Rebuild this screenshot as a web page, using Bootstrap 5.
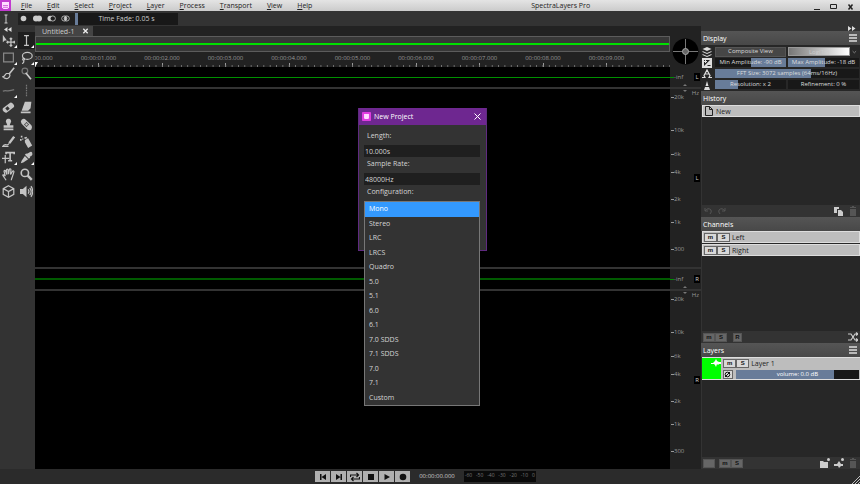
<!DOCTYPE html>
<html lang="en" data-bs-theme="dark">
<head>
<meta charset="utf-8">
<meta name="viewport" content="width=device-width, initial-scale=1">
<title>SpectraLayers Pro</title>
<link rel="stylesheet" href="https://cdn.jsdelivr.net/npm/bootstrap@5.3.0/dist/css/bootstrap.min.css">
<style>
  body { font: 7px/9px "Open Sans", "Noto Sans", sans-serif; color: #ccc; background: #272727; }
  svg { display: block; }
  button, input, select { font: inherit; color: inherit; border: 0; padding: 0; margin: 0; background: none; }
  button { display: flex; align-items: center; justify-content: center; }
  a { color: inherit; text-decoration: none; }
  .ico { width: 10px; height: 10px; fill: none; stroke: currentColor; stroke-width: 2; }
  .solid { fill: currentColor; stroke: none; }

  .menubar { height: 11px; color: #222; background: linear-gradient(#e4e4e4, #cbcbcb); }
  .menus { gap: 15px; margin-left: 10px; }
  .logo { width: 11px; height: 11px; }
  .winbtn { width: 17px; height: 11px; }
  .options { height: 15px; background: #333; }
  .optbox { background: #212121; height: 12px; gap: 5px; padding: 0 5px 0 1px; }
  .optbox .ico { width: 9px; height: 9px; }
  .slide.fade-time { width: 103px; height: 12px; }
  .slide.fade-time input { height: 12px; }

  .tools { width: 35px; background: #333; color: #c4c4c4; }
  .collapse-row { height: 6px; }
  .panels .collapse-row { height: 5px; }
  .toolgrid { display: grid; grid-template-columns: 1fr 1fr; grid-template-rows: repeat(10, 1fr); height: 168px; }
  .toolgrid button { position: relative; }
  .toolgrid .ico { width: 13px; height: 13px; stroke-width: 1.5; }
  .toolgrid .more::after { content: ""; position: absolute; right: 1px; bottom: 1px; border: 0 solid transparent; border-width: 0 0 3px 3px; border-bottom-color: #fff; }
  .toolgrid .on { background: #1e1e1e; }
  .toolgrid .dim { color: #777; }

  .doctabs { height: 10px; background: #222; }
  .doctab { width: 58px; padding: 0 4px 0 7px; background: #444; }
  .overview { height: 16px; background: #383838; border: 1px solid #5c5c5c; }
  .overview i { display: block; height: 2px; background: #00e000; }
  .ruler { height: 15px; background: #222; color: #999; font-size: 6px; overflow: hidden; position: relative; }
  .ruler-marks { margin: 0 5% 0 -5%; height: 15px; }
  .ruler-marks span { width: 10%; padding-top: 2px; white-space: nowrap; display: flex; flex-direction: column; align-items: center; }
  .ruler-marks span::after { content: ""; width: 1px; height: 4px; background: #999; }
  .ruler::after { content: ""; position: absolute; inset: auto 0 0 0; height: 2px; background: linear-gradient(90deg, #777 1px, transparent 1px) 0 0 / 1% 2px; }
  .playhead { position: absolute; left: -3px; bottom: 0; z-index: 1; border: 3px solid transparent; border-top: 5px solid #fff; border-bottom: 0; }
  .scale { width: 31px; background: #222; color: #999; font-size: 6px; position: relative; flex: none; }
  .lane-scale { padding-right: 1px; }
  .wave { height: 22px; border-bottom: 2px solid #333; }
  .wave.second { height: 24px; border-top: 2px solid #333; }
  .wave .view, .overview { display: flex; flex-direction: column; justify-content: center; }
  .wave .view i { display: block; height: 1px; background: #009000; }
  .wave.second .view i { height: 2px; background: #005a00; }
  .view { background: #000; flex: 1; min-width: 0; }
  .freq { display: grid; grid-template-rows: 13fr 33fr 24fr 18fr 27fr 23fr 27fr 13fr; flex: 1; }
  .freq span, .inf { display: flex; align-items: flex-end; line-height: 9px; }
  .freq span::before, .inf::before { content: ""; width: 3px; height: 1px; background: #999; margin: 0 0 4px 1px; }
  .inf::before { background: #009000; margin-left: 0; width: 4px; }
  .tag { width: 6px; height: 8px; font-size: 6px; line-height: 8px; text-align: center; background: #000; color: #ccc; }
  .hz { position: absolute; right: 2px; top: 0; }
  .tri { position: absolute; left: 13px; width: 4px; height: 2px; background: #777; }
  .tri.up { bottom: 1px; clip-path: polygon(50% 0, 100% 100%, 0 100%); }
  .tri.down { top: 1px; clip-path: polygon(0 0, 100% 0, 50% 100%); }

  .panels { width: 159px; background: #333; }
  .phead { height: 14px; padding: 0 2px; color: #ddd; background: linear-gradient(#555, #484848); display: flex; align-items: center; justify-content: space-between; }
  .phead h2 { font-size: 7px; line-height: 9px; margin: 0; font-weight: 400; }
  .pbody { background: #272727; flex: 1; min-height: 0; border-left: 1px solid #333; }
  .pfoot { height: 12px; padding: 0 2px; background: #333; color: #ccc; }
  .settings { display: grid; grid-template-columns: 12px 1fr 1fr; column-gap: 2px; grid-auto-rows: 11px; row-gap: 0; padding: 1px 1px 1px 0; align-items: center; font-size: 6px; background: #272727; color: #ddd; }
  .settings > .ico { justify-self: center; }
  .cbtn { height: 10px; background: #464646; border: 1px solid #555; }
  .grad { height: 9px; width: 100%; background: linear-gradient(90deg, #777, #fff); color: #ccc; appearance: none; text-align: center; border: 1px solid #999; }
  .slide { display: grid; height: 9px; align-items: center; }
  .slide > * { grid-area: 1 / 1; }
  .slide label { text-align: center; z-index: 1; pointer-events: none; white-space: nowrap; line-height: 9px; }
  .slide input { appearance: none; width: 100%; height: 9px; background: linear-gradient(90deg, #181818 var(--from), #687c99 var(--from) var(--to), #181818 var(--to)); }
  .slide input::-webkit-slider-thumb { appearance: none; width: 1px; height: 9px; background: transparent; }
  .entry { height: 12px; background: #bdbdbd; border: 1px solid #ddd; color: #222; padding-left: 1px; gap: 2px; }
  .entry + .entry { margin-top: 1px; }
  .ms { width: 13px; height: 9px; color: #111; background: #d8d8d8; border: 1px solid #666; font: 700 6px/7px "Liberation Sans", sans-serif; }
  .ms.slim { width: 10px; }
  .pfoot .ms { width: 12px; background: #666; border: 1px solid #555; }
  .pfoot .ms.slim { width: 9px; margin-left: 6px; }
  .layer { height: 23px; background: #bdbdbd; border: 1px solid #ddd; border-width: 1px 0; color: #222; }
  .layer .chip { width: 20px; background: #0f0; color: #fff; }
  .layer .rows { padding: 1px 1px 0 2px; }
  .layer-name { padding-left: 2px; }
  .layer .slide { font-size: 6px; margin-left: 3px; }
  .faint { color: #555; }

  .dialogbox { position: absolute; left: 358px; top: 108px; width: 129px; height: 143px; background: #333; border: 1px solid #5f2a80; border-top: 0; color: #d5d5d5; }
  .dialogbox header { height: 17px; background: #6e2790; color: #fff; padding: 0 5px 0 3px; gap: 3px; }
  .dialogbox form { padding: 4px 6px 0 5px; }
  .dialogbox form > label { display: block; height: 16px; line-height: 14px; padding-left: 3px; }
  .dialogbox form > input { display: block; width: 100%; height: 12px; background: #1f1f1f; padding-left: 1px; }
  .configs { display: block; width: 100%; height: 205px; overflow: hidden; background: #333; border: 1px solid #777; border-radius: 0; appearance: none; outline: 0; }
  .configs option { height: 14px; min-height: 14px; line-height: 12px; padding: 2px 4px 0; color: #d5d5d5; }
  .configs option:nth-child(odd) { height: 15px; }
  .configs option:checked { background: #39f linear-gradient(#39f, #39f); color: #fff; }

  .transport { height: 15px; background: #2b2b2b; }
  .tbtns button { width: 16px; height: 11px; background: #b0b0b0; color: #111; border-right: 1px solid #2b2b2b; }
  .clock { font-size: 6px; margin: 0 9px 0 8px; }
  .meter { width: 72px; height: 11px; padding: 0 1px; background: #0a0a0a; color: #777; font-size: 5px; }
  .grip { width: 9px; height: 9px; align-self: flex-end; }
</style>
<script src="https://cdn.jsdelivr.net/npm/bootstrap@5.3.0/dist/js/bootstrap.bundle.min.js"></script>
</head>
<body class="d-flex flex-column vh-100 overflow-hidden">

<header class="menubar d-flex align-items-center">
  <svg class="logo" viewBox="0 0 11 11"><rect width="11" height="11" fill="#c23ad0"/><path d="M2 2h7v5.500l-1.500 1.500H3.500L2 7.500z" fill="#ffd9ff"/><path d="M3 5.500h5M3 7.300h5" stroke="#c23ad0" stroke-width=".7"/></svg>
  <nav class="menus d-flex">
    <a href="#"><u>F</u>ile</a><a href="#"><u>E</u>dit</a><a href="#"><u>S</u>elect</a><a href="#"><u>P</u>roject</a><a href="#"><u>L</u>ayer</a><a href="#"><u>P</u>rocess</a><a href="#"><u>T</u>ransport</a><a href="#"><u>V</u>iew</a><a href="#"><u>H</u>elp</a>
  </nav>
  <div class="flex-fill text-center">SpectraLayers Pro</div>
  <button class="winbtn" aria-label="Minimize"><svg class="ico" viewBox="0 0 10 10"><path d="M1 8.500h6" stroke-width="1"/></svg></button>
  <button class="winbtn" aria-label="Maximize"><svg class="ico" viewBox="0 0 10 10"><path d="M.5 3.500h6v4h-6z" stroke-width="1"/></svg></button>
  <button class="winbtn" aria-label="Close"><svg class="ico" viewBox="0 0 10 10"><path d="M1.500 3.500l4 5M5.500 3.500l-4 5" stroke-width="1.500"/></svg></button>
</header>

<div class="options d-flex align-items-center">
  <svg class="ico mx-1" viewBox="0 0 10 10"><path d="M.5 1h3M.5 9h3M2 1v8" stroke-width="1"/></svg>
  <div class="optbox d-flex align-items-center">
    <button aria-label="Replace"><svg class="ico solid" viewBox="0 0 9 9"><circle cx="4.500" cy="4.500" r="2.800"/></svg></button>
    <button aria-label="Add"><svg class="ico solid" viewBox="0 0 9 9"><circle cx="3" cy="4.500" r="3"/><circle cx="6" cy="4.500" r="3"/></svg></button>
    <button aria-label="Subtract"><svg class="ico" viewBox="0 0 9 9"><circle cx="3.300" cy="4.500" r="2.800" fill="currentColor" stroke="none"/><circle cx="5.800" cy="4.500" r="2.600" fill="#212121" stroke-width=".8"/></svg></button>
    <button aria-label="Intersect"><svg class="ico" viewBox="0 0 9 9"><circle cx="3.300" cy="4.500" r="2.600" stroke-width=".8"/><circle cx="5.700" cy="4.500" r="2.600" stroke-width=".8"/><path d="M4.500 2.200a2.700 2.700 0 0 1 0 4.600a2.700 2.700 0 0 1 0-4.600z" fill="currentColor" stroke="none"/></svg></button>
  </div>
  <div class="slide fade-time" style="--from:0%;--to:3%"><label for="fade">Time Fade: 0.05 s</label><input id="fade" type="range" value="3"></div>
</div>

<main class="d-flex flex-fill overflow-hidden">
  <aside class="tools">
    <button class="collapse-row ms-1" aria-label="Collapse tools"><svg width="8" height="5" viewBox="0 0 8 5" fill="#ddd"><path d="M3.500 0v5L0 2.500zM7.500 0v5L4 2.500z"/></svg></button>
    <div class="toolgrid">
      <button class="more" aria-label="Move"><svg class="ico" viewBox="0 0 16 16"><path d="M1 1v9l2.500-2L6 8z" fill="currentColor" stroke="none"/><path d="M11 5v10M6 10h10M9.500 6.500 11 5l1.500 1.500M9.500 13.500 11 15l1.500-1.500M7.500 8.500 6 10l1.500 1.500M14.500 8.500 16 10l-1.500 1.500"/></svg></button>
      <button class="on more" aria-label="Time selection"><svg class="ico" viewBox="0 0 16 16"><path d="M5 2h6M5 14h6M8 2v12"/></svg></button>
      <button class="more" aria-label="Rectangle"><svg class="ico" viewBox="0 0 16 16"><path d="M2 2.500h12v11H2z" stroke="#888"/></svg></button>
      <button class="more" aria-label="Lasso"><svg class="ico" viewBox="0 0 16 16"><ellipse cx="9" cy="6" rx="6" ry="4.200"/><path d="M4.500 9c-2 1-1 3 .5 2s0-3-1.500-2M4.500 12c.5 1.500-.5 3-2 3.500"/></svg></button>
      <button aria-label="Brush selection"><svg class="ico" viewBox="0 0 16 16"><path d="M15 1 8.500 9" stroke-width="2"/><path d="M8.500 8c2 1 1.500 5-1.500 6-2 .5-4 0-6-2 2.500 0 2.500-3 4.500-4z"/></svg></button>
      <button class="dim" aria-label="Wand"><svg class="ico" viewBox="0 0 16 16"><circle cx="6" cy="5" r="3.500"/><path d="m7 7 6.500 8" stroke="#ccc" stroke-width="2"/></svg></button>
      <button class="dim more" aria-label="Harmonics"><svg class="ico" viewBox="0 0 16 16"><path d="M1 9c4-2 6 1 14-2"/></svg></button>
      <button class="dim" aria-label="Transient"><svg class="ico" viewBox="0 0 16 16"><path d="M8 1v14" stroke-dasharray="2 1"/></svg></button>
      <button aria-label="Eraser"><svg class="ico solid" viewBox="0 0 16 16"><path fill-rule="evenodd" d="M1 9 10 2q2-1 4 2t0 4L6 14q-2 1-4-1t-1-4zm3 0 2.500 3 3-2.500L7 6.500z"/></svg></button>
      <button aria-label="Amplify"><svg class="ico solid" viewBox="0 0 16 16"><path d="M6 1h8l-1 8-3 3H2zM1 13h12v2H1z"/></svg></button>
      <button aria-label="Clone stamp"><svg class="ico solid" viewBox="0 0 16 16"><path d="M8 1a3 3 0 0 1 2.500 5L9.500 9H14v3H2V9h4.500l-1-3A3 3 0 0 1 8 1zM2 13h12v2H2z"/></svg></button>
      <button aria-label="Heal"><svg class="ico solid" viewBox="0 0 16 16"><path fill-rule="evenodd" d="M2 2q3-2 5 0l7 7q2 3 0 5t-5 0L2 7Q0 4 2 2zm6 3L5 8l3 3 3-3z"/><circle cx="8" cy="8" r="1.500"/></svg></button>
      <button aria-label="Pencil"><svg class="ico" viewBox="0 0 16 16"><path d="M15 2 9 10" stroke-width="3"/><path d="M9 10c-2 5-5-1-8 4h7" stroke-width="1.500"/></svg></button>
      <button aria-label="Spray"><svg class="ico solid" viewBox="0 0 16 16"><path d="m6 6 4-2 5 9-5 3-4-7zM5 3l3-1 1 2-3 1zM1 1h2v2H1zM0 5h2v2H0zM3 4h1v2H3z"/></svg></button>
      <button class="more" aria-label="Text transform"><svg class="ico" viewBox="0 0 16 16"><path d="M5 4V2h10v2M10 2v10M7.500 12h5" stroke-width="2"/><path d="M0 9h9M4 5v10"/></svg></button>
      <button class="more" aria-label="Eyedropper"><svg class="ico solid" viewBox="0 0 16 16"><path d="M11 2q3-2 4 0t-1 4l-2 1 .5 1-1.500 1.500-5-5L7.500 3l1 .5zM6 6l4 4-6 4-3 1 1-3z"/></svg></button>
      <button aria-label="Hand"><svg class="ico" viewBox="0 0 16 16"><path d="M5 15c-1-2-3-4-4-6 0-1 1.500-1 3 1L2.500 4c0-1.500 1.500-1.500 2 0L6 8 5.500 2.500c0-1.500 2-1.500 2 0L8 7.500 9 2c.3-1.300 2-1 2 .3L10.500 8 13 4c.8-1 2-.3 1.600 1L13 10c-.5 2-1.500 3-1.500 5"/></svg></button>
      <button aria-label="Zoom"><svg class="ico" viewBox="0 0 16 16"><circle cx="6" cy="6" r="4.500" stroke-width="2"/><path d="m9.500 9.500 5 5" stroke-width="3"/></svg></button>
      <button aria-label="3D view"><svg class="ico" viewBox="0 0 16 16"><path d="m8 1 6.500 3.500v7L8 15l-6.500-3.500v-7zM1.500 4.500 8 8l6.500-3.500M8 8v7"/></svg></button>
      <button aria-label="Playback"><svg class="ico" viewBox="0 0 16 16"><path d="M0 5h3.500L8 1v14l-4.500-4H0z" fill="currentColor" stroke="none"/><path d="M10 5.500q2 2.500 0 5M12 3.500q3.500 4.500 0 9M13.500 1.500q4.500 6.500 0 13"/></svg></button>
    </div>
  </aside>

  <section class="d-flex flex-column flex-fill overflow-hidden">
    <div class="doctabs d-flex">
      <div class="doctab d-flex align-items-center justify-content-between">Untitled-1<button aria-label="Close tab"><svg width="7" height="8" viewBox="0 0 8 8"><path d="M1.500 1.500l5 5M6.500 1.500l-5 5" stroke="#eee" stroke-width="1.500"/></svg></button></div>
    </div>
    <div class="d-flex">
      <div class="flex-fill overflow-hidden">
        <div class="overview"><i></i></div>
        <div class="ruler"><b class="playhead"></b>
          <div class="ruler-marks d-flex"><span>00:00:00.000</span><span>00:00:01.000</span><span>00:00:02.000</span><span>00:00:03.000</span><span>00:00:04.000</span><span>00:00:05.000</span><span>00:00:06.000</span><span>00:00:07.000</span><span>00:00:08.000</span><span>00:00:09.000</span></div>
        </div>
      </div>
      <div class="scale d-flex align-items-center justify-content-center">
        <svg width="27" height="27" viewBox="0 0 27 27"><circle cx="13.500" cy="13.500" r="13" fill="#000"/><path d="M13.500 1v25M1 13.500h25" stroke="#777"/><circle cx="13.500" cy="13.500" r="3" fill="#666" stroke="#aaa"/></svg>
      </div>
    </div>

    <div class="wave d-flex"><div class="view"><i></i></div>
      <div class="scale lane-scale d-flex align-items-center justify-content-between"><span class="inf">-inf</span><span class="tag">L</span><i class="tri up"></i></div></div>
    <div class="d-flex flex-fill"><div class="view"></div>
      <div class="scale lane-scale d-flex align-items-center"><div class="freq h-100"><span>20k</span><span>10k</span><span>6k</span><span>4k</span><span>2k</span><span>1k</span><span>300</span></div><span class="tag">L</span><span class="hz">Hz</span><i class="tri down"></i></div></div>
    <div class="wave second d-flex"><div class="view"><i></i></div>
      <div class="scale lane-scale d-flex align-items-center justify-content-between"><span class="inf">-inf</span><span class="tag">R</span><i class="tri up"></i></div></div>
    <div class="d-flex flex-fill"><div class="view"></div>
      <div class="scale lane-scale d-flex align-items-center"><div class="freq h-100"><span>20k</span><span>10k</span><span>6k</span><span>4k</span><span>2k</span><span>1k</span><span>300</span></div><span class="tag">R</span><span class="hz">Hz</span><i class="tri down"></i></div></div>
  </section>

  <aside class="panels d-flex flex-column flex-shrink-0">
    <button class="collapse-row ms-auto me-1" aria-label="Collapse panels"><svg width="8" height="5" viewBox="0 0 8 5" fill="#ddd"><path d="M0 0v5l3.500-2.500zM4 0v5l3.500-2.500z"/></svg></button>
    <div class="phead"><h2>Display</h2><button aria-label="Display menu"><svg class="ico" viewBox="0 0 10 10"><path d="M1 2h8M1 5h8M1 8h8" stroke-width="1.500"/></svg></button></div>
    <div class="settings">
      <svg class="ico solid" viewBox="0 0 10 10"><path d="m5 0 4.500 2L5 4 .5 2zM.5 4 5 6l4.500-2v1L5 7 .5 5zM.5 7 5 9l4.500-2v1L5 10 .5 8z"/></svg>
      <button class="cbtn">Composite View</button>
      <div class="d-flex align-items-center"><select class="grad" aria-label="Colour scale"><option>Log(1+)</option></select><svg class="ico" viewBox="0 0 10 10"><path d="m3 4 2 2 2-2" stroke="#888" stroke-width="1"/></svg></div>
      <svg class="ico" viewBox="0 0 10 10"><path d="M1 1h8v8H1z" fill="#222" stroke="#ddd"/><path d="M9 1v8H1z" fill="#ddd" stroke="none"/><path d="M2 3.500h3M3.500 2v3" stroke="#ddd" stroke-width="1"/><path d="M5.500 7.500h3" stroke="#222" stroke-width="1"/></svg>
      <div class="slide" style="--from:50%;--to:100%"><label for="minA">Min Amplitude: -90 dB</label><input id="minA" type="range"></div>
      <div class="slide" style="--from:0%;--to:52%"><label for="maxA">Max Amplitude: -18 dB</label><input id="maxA" type="range"></div>
      <svg class="ico" viewBox="0 0 10 10"><path d="M0 8.500h3L2 6.500 5 1l3 5.500-1 2h3M2.500 5h5" stroke-width="1.200"/></svg>
      <div class="slide" style="grid-column:span 2;--from:0%;--to:67%"><label for="fft">FFT Size: 3072 samples (64ms/16Hz)</label><input id="fft" type="range"></div>
      <svg class="ico solid" viewBox="0 0 10 10"><path d="m5 1 1.500 5H3.500zM3 7h4l1 3H2z"/></svg>
      <div class="slide" style="--from:0%;--to:33%"><label for="res">Resolution: x 2</label><input id="res" type="range"></div>
      <div class="slide" style="--from:0%;--to:0%"><label for="ref">Refinement: 0 %</label><input id="ref" type="range"></div>
    </div>

    <div class="phead"><h2>History</h2></div>
    <div class="pbody">
      <div class="entry d-flex align-items-center"><svg class="ico" viewBox="0 0 10 10"><path d="M1.500.5h4l3 3v6h-7zM5.500.5v3h3" stroke-width="1"/></svg>New</div>
    </div>
    <div class="pfoot d-flex align-items-center">
      <button class="faint me-1" aria-label="Undo"><svg class="ico" viewBox="0 0 10 10"><path d="M2 2v3h3M2 5q3-4 6-1 1 2-1 4" stroke-width="1"/></svg></button>
      <button class="faint" aria-label="Redo"><svg class="ico" viewBox="0 0 10 10"><path d="M8 2v3H5M8 5q-3-4-6-1-1 2 1 4" stroke-width="1"/></svg></button>
      <button class="ms-auto me-1" aria-label="Duplicate"><svg class="ico solid" viewBox="0 0 10 10"><path d="M0 1h5v2H3v4H0zM4 4h3l2 2v4H4z"/></svg></button>
      <button class="faint" aria-label="Delete"><svg class="ico solid" viewBox="0 0 10 10"><path d="M2 1h2V0h2v1h2v1H2zM2 3h6v7H2z"/></svg></button>
    </div>

    <div class="phead"><h2>Channels</h2></div>
    <div class="pbody">
      <div class="entry d-flex align-items-center"><div class="d-flex"><button class="ms">m</button><button class="ms">S</button></div>Left</div>
      <div class="entry d-flex align-items-center"><div class="d-flex"><button class="ms">m</button><button class="ms">S</button></div>Right</div>
    </div>
    <div class="pfoot d-flex align-items-center">
      <button class="ms">m</button><button class="ms">S</button><button class="ms slim">R</button>
      <button class="ms-auto" aria-label="Shuffle"><svg class="ico" viewBox="0 0 10 10"><path d="M0 2h3l4 6h3M0 8h3l4-6h3M8 .5 10 2 8 3.500M8 6.500 10 8 8 9.500" stroke-width="1.200"/></svg></button>
    </div>

    <div class="phead"><h2>Layers</h2><button aria-label="Layers menu"><svg class="ico" viewBox="0 0 10 10"><path d="M1 2h8M1 5h8M1 8h8" stroke-width="1.500"/></svg></button></div>
    <div class="pbody">
      <div class="layer d-flex">
        <div class="chip d-flex justify-content-end"><svg class="ico solid" viewBox="0 0 10 10"><path d="M0 5h2l1-1 1-1 1-2 1 2 2 1h2v2H8L7 7 6 6 5 9 4 7 3 6H0z"/></svg></div>
        <div class="rows flex-fill d-flex flex-column justify-content-between">
          <div class="d-flex align-items-center"><button class="ms">m</button><button class="ms">S</button><span class="layer-name">Layer 1</span></div>
          <div class="d-flex align-items-center"><button class="ms slim" aria-label="Phase"><svg width="7" height="7" viewBox="0 0 7 7" fill="none" stroke="#111"><circle cx="3.500" cy="3.500" r="2.300"/><path d="M6 1 1 6"/></svg></button>
            <div class="slide flex-fill text-white" style="--from:0%;--to:80%"><label for="vol">volume: 0.0 dB</label><input id="vol" type="range"></div></div>
        </div>
      </div>
    </div>
    <div class="pfoot d-flex align-items-center">
      <button class="ms me-1" aria-label="Colour"></button><button class="ms">m</button><button class="ms">S</button>
      <button class="ms-auto me-1" aria-label="New group"><svg class="ico solid" viewBox="0 0 10 10"><path d="M0 3h3l1 1h4v6H0z"/><circle cx="8.500" cy="1.500" r="1.500"/></svg></button>
      <button class="me-1" aria-label="New layer"><svg class="ico solid" viewBox="0 0 10 10"><path d="M0 6h3l2-3 2 3h2v2H7L5 10 4 8H0z"/><circle cx="8.500" cy="1.500" r="1.500"/></svg></button>
      <button class="faint" aria-label="Delete layer"><svg class="ico solid" viewBox="0 0 10 10"><path d="M2 1h2V0h2v1h2v1H2zM2 3h6v7H2z"/></svg></button>
    </div>
  </aside>
</main>

<footer class="transport d-flex align-items-center">
  <div class="flex-fill d-flex align-items-center justify-content-center">
    <div class="tbtns d-flex">
      <button aria-label="To start"><svg class="ico solid" viewBox="0 0 10 10"><path d="M2 2h1.500v6H2zM8 2v6L3.500 5z"/></svg></button>
      <button aria-label="To end"><svg class="ico solid" viewBox="0 0 10 10"><path d="M6.500 2H8v6H6.500zM2 2v6l4.500-3z"/></svg></button>
      <button aria-label="Loop"><svg class="ico" viewBox="0 0 10 10"><path d="M.5 5V3H8M9.500 5v2H2M6.500 1l2 2-2 2M3.500 5l-2 2 2 2" stroke-width="1.200"/></svg></button>
      <button aria-label="Stop"><svg class="ico solid" viewBox="0 0 10 10"><path d="M2 2h6v6H2z"/></svg></button>
      <button aria-label="Play"><svg class="ico solid" viewBox="0 0 10 10"><path d="M2.500 2v6L8 5z"/></svg></button>
      <button aria-label="Record"><svg class="ico solid" viewBox="0 0 10 10"><circle cx="5" cy="5" r="3.300"/></svg></button>
    </div>
    <span class="clock">00:00:00.000</span>
    <div class="meter d-flex justify-content-between"><span>-60</span><span>-50</span><span>-40</span><span>-30</span><span>-20</span><span>-10</span><span>0</span></div>
  </div>
  <svg class="grip" viewBox="0 0 9 9"><path d="M1 9 9 1M4 9l5-5M7 9l2-2" stroke="#bbb"/></svg>
</footer>

<div class="dialogbox" role="dialog" aria-label="New Project">
  <header class="d-flex align-items-center">
    <svg width="9" height="9" viewBox="0 0 11 11"><rect width="11" height="11" rx="1" fill="#e03ce0"/><path d="M2.500 2.500h6v5l-1 1h-4l-1-1z" fill="#ffd9ff"/></svg>
    <span class="flex-fill">New Project</span>
    <button aria-label="Close dialog"><svg width="7" height="7" viewBox="0 0 7 7"><path d="M.5.5l6 6M6.500.5l-6 6" stroke="#fff"/></svg></button>
  </header>
  <form>
    <label for="len">Length:</label><input id="len" value="10.000s">
    <label for="rate">Sample Rate:</label><input id="rate" value="48000Hz">
    <label for="conf">Configuration:</label>
    <select id="conf" class="configs" size="14">
      <option selected>Mono</option><option>Stereo</option><option>LRC</option><option>LRCS</option><option>Quadro</option><option>5.0</option><option>5.1</option><option>6.0</option><option>6.1</option><option>7.0 SDDS</option><option>7.1 SDDS</option><option>7.0</option><option>7.1</option><option>Custom</option>
    </select>
  </form>
</div>
</body>
</html>
